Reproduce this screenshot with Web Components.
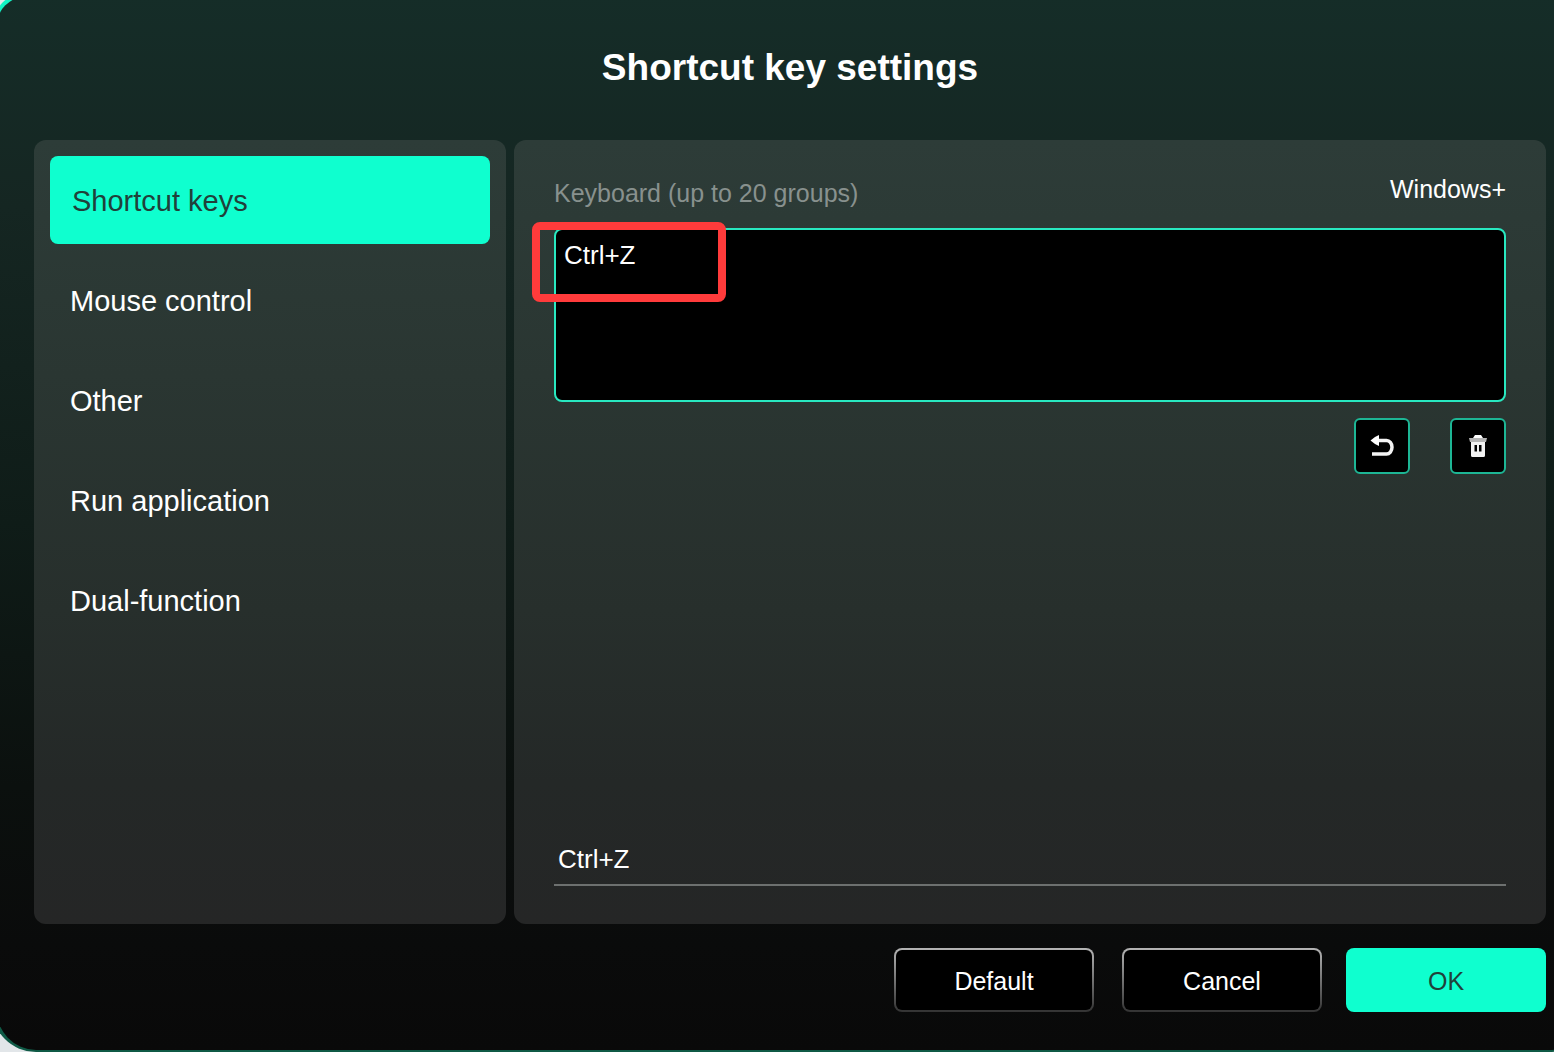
<!DOCTYPE html>
<html lang="en">
<head>
<meta charset="utf-8">
<title>Shortcut key settings</title>
<style>
  html { height: 100%; }
  body { margin: 0; min-height: 100%; display: flex; overflow: hidden; background: #e2e6e9; color: #fff; font-family: "Liberation Sans", Arial, sans-serif; }
</style>
</head>
<body>
<settings-dialog>
  <h1 slot="title">Shortcut key settings</h1>
  <side-menu slot="menu">
    <menu-item active>Shortcut keys</menu-item>
    <menu-item>Mouse control</menu-item>
    <menu-item>Other</menu-item>
    <menu-item>Run application</menu-item>
    <menu-item>Dual-function</menu-item>
  </side-menu>
  <shortcut-editor slot="content" value="Ctrl+Z"></shortcut-editor>
  <dialog-button slot="actions" class="default">Default</dialog-button>
  <dialog-button slot="actions">Cancel</dialog-button>
  <dialog-button slot="actions" primary>OK</dialog-button>
</settings-dialog>
<script>
const define = (name, html, setup) => customElements.define(name, class extends HTMLElement {
  constructor() {
    super();
    this.attachShadow({ mode: 'open' }).innerHTML = html;
  }
  connectedCallback() { if (setup) setup(this, this.shadowRoot); }
});

define('settings-dialog', `
<style>
  :host { flex: 1; display: flex; flex-direction: column; box-sizing: border-box; margin: -8px -40px 0 -8px; padding: 0 46px 38px 38px;
    border: solid transparent; border-width: 4px 2px 2px 4px; border-radius: 36px 36px 44px 44px;
    background: linear-gradient(#152d28, #152622 20%, #0f1c18 50%, #0b100e 75%, #0a0b0b 90%, #090909) padding-box,
      linear-gradient(#13f5c6, #10bd99 30%, #0f5945) border-box; }
  header { display: flex; justify-content: center; align-items: center; height: 144px; }
  ::slotted(h1) { margin: 0; font-size: 37px; line-height: 44px; font-weight: 700; }
  main { flex: 1; display: grid; grid-template-columns: minmax(0, 472fr) minmax(0, 1032fr); gap: 8px; }
  footer { display: flex; justify-content: flex-end; gap: 24px; margin-top: 24px; }
  ::slotted(.default) { margin-right: 4px; }
</style>
<header><slot name="title"></slot></header>
<main><slot name="menu"></slot><slot name="content"></slot></main>
<footer><slot name="actions"></slot></footer>`);

define('side-menu', `
<style>
  :host { display: block; box-sizing: border-box; padding: 16px; border-radius: 12px; background: linear-gradient(#2d3c38, #2a3632 30%, #272f2c 60%, #242827 82%, #252626); }
  nav { display: flex; flex-direction: column; gap: 12px; }
</style>
<nav aria-label="Settings"><slot></slot></nav>`);

define('menu-item', `
<style>
  :host { display: block; }
  button { width: 100%; height: 88px; margin: 0; padding: 2px 20px 0; border: 0; border-radius: 8px; background: none; color: inherit; font: 29px/34px "Liberation Sans", Arial, sans-serif; text-align: left; }
  :host([active]) button { background: #0fffcf; color: #20413a; padding-left: 22px; }
</style>
<button type="button"><slot></slot></button>`);

define('icon-button', `
<style>
  :host { display: block; }
  button { display: flex; align-items: center; justify-content: center; width: 56px; height: 56px; padding: 0; border: 2px solid #1db695; border-radius: 6px; background: #000; color: #fff; }
  ::slotted(svg) { display: block; width: 24px; height: 24px; }
</style>
<button type="button"><slot></slot></button>`, (host, root) => {
  root.querySelector('button').setAttribute('aria-label', host.getAttribute('label'));
});

define('highlight-box', `
<style>
  :host { display: block; box-sizing: border-box; border: 8px solid #ff3b3b; border-radius: 8px; pointer-events: none; }
</style>`);

define('shortcut-editor', `
<style>
  :host { display: flex; flex-direction: column; box-sizing: border-box; padding: 34px 40px 38px; border-radius: 12px; background: linear-gradient(#2d3c38, #2a3632 30%, #272f2c 60%, #242827 82%, #252626); }
  .head { display: flex; justify-content: space-between; height: 34px; font-size: 25px; line-height: 30px; }
  .head label { align-self: flex-end; color: #88918e; }
  .head button { align-self: flex-start; padding: 0; border: 0; background: none; color: #fff; font: inherit; }
  .field { position: relative; margin-top: 20px; }
  textarea { display: block; box-sizing: border-box; width: 100%; height: 174px; padding: 10px 8px; border: 2px solid #28e8c0; border-radius: 8px; outline: 0; resize: none; background: #000; color: #fff; font: 26px/30px "Liberation Sans", Arial, sans-serif; }
  highlight-box { position: absolute; left: -22px; top: -6px; width: 194px; height: 80px; }
  .tools { display: flex; justify-content: flex-end; gap: 40px; margin-top: 16px; }
  .name { box-sizing: border-box; width: 100%; height: 42px; margin-top: auto; padding: 0 4px 10px; border: 0; border-bottom: 2px solid #6d706f; border-radius: 0; outline: 0; background: none; color: #fff; font: 26px/30px "Liberation Sans", Arial, sans-serif; }
</style>
<div class="head"><label for="keys">Keyboard (up to 20 groups)</label><button type="button">Windows+</button></div>
<div class="field"><textarea id="keys" spellcheck="false"></textarea><highlight-box></highlight-box></div>
<div class="tools">
  <icon-button label="Undo"><svg viewBox="0 0 24 24"><path d="M8 6.500H16.500a5.500 6.750 0 0 1 0 13.500H2" fill="none" stroke="#f4f4f4" stroke-width="3.500"/><path d="M.5 6.500 5 3 9 1v11L5 10Z" fill="#fff"/></svg></icon-button>
  <icon-button label="Delete"><svg viewBox="0 0 24 24"><path d="M9 1h6l2 3H7Z" fill="#fff"/><path d="M3 4h18l-1 4H4Z" fill="#b4b4b4"/><path fill-rule="evenodd" d="M5 8h14v13.500q0 1.500-1.500 1.500h-11Q5 23 5 21.500ZM8.500 11v6.500h2.500V11Zm4.500 0v6.500h2.500V11Z" fill="#f2f2f2"/></svg></icon-button>
</div>
<input class="name" type="text" aria-label="Shortcut name" spellcheck="false">`, (host, root) => {
  root.getElementById('keys').value = host.getAttribute('value');
  root.querySelector('.name').value = host.getAttribute('value');
});

define('dialog-button', `
<style>
  :host { display: block; }
  button { display: block; box-sizing: border-box; width: 200px; height: 64px; padding: 2px 0 0; border: 2px solid transparent; border-radius: 8px; color: #fff; font: 25px/30px "Liberation Sans", Arial, sans-serif;
    background: linear-gradient(#000, #000) padding-box, linear-gradient(#b4b4b4, #333) border-box; }
  :host([primary]) button { border: 0; background: #0fffcf; color: #20413a; }
</style>
<button type="button"><slot></slot></button>`);
</script>
</body>
</html>
